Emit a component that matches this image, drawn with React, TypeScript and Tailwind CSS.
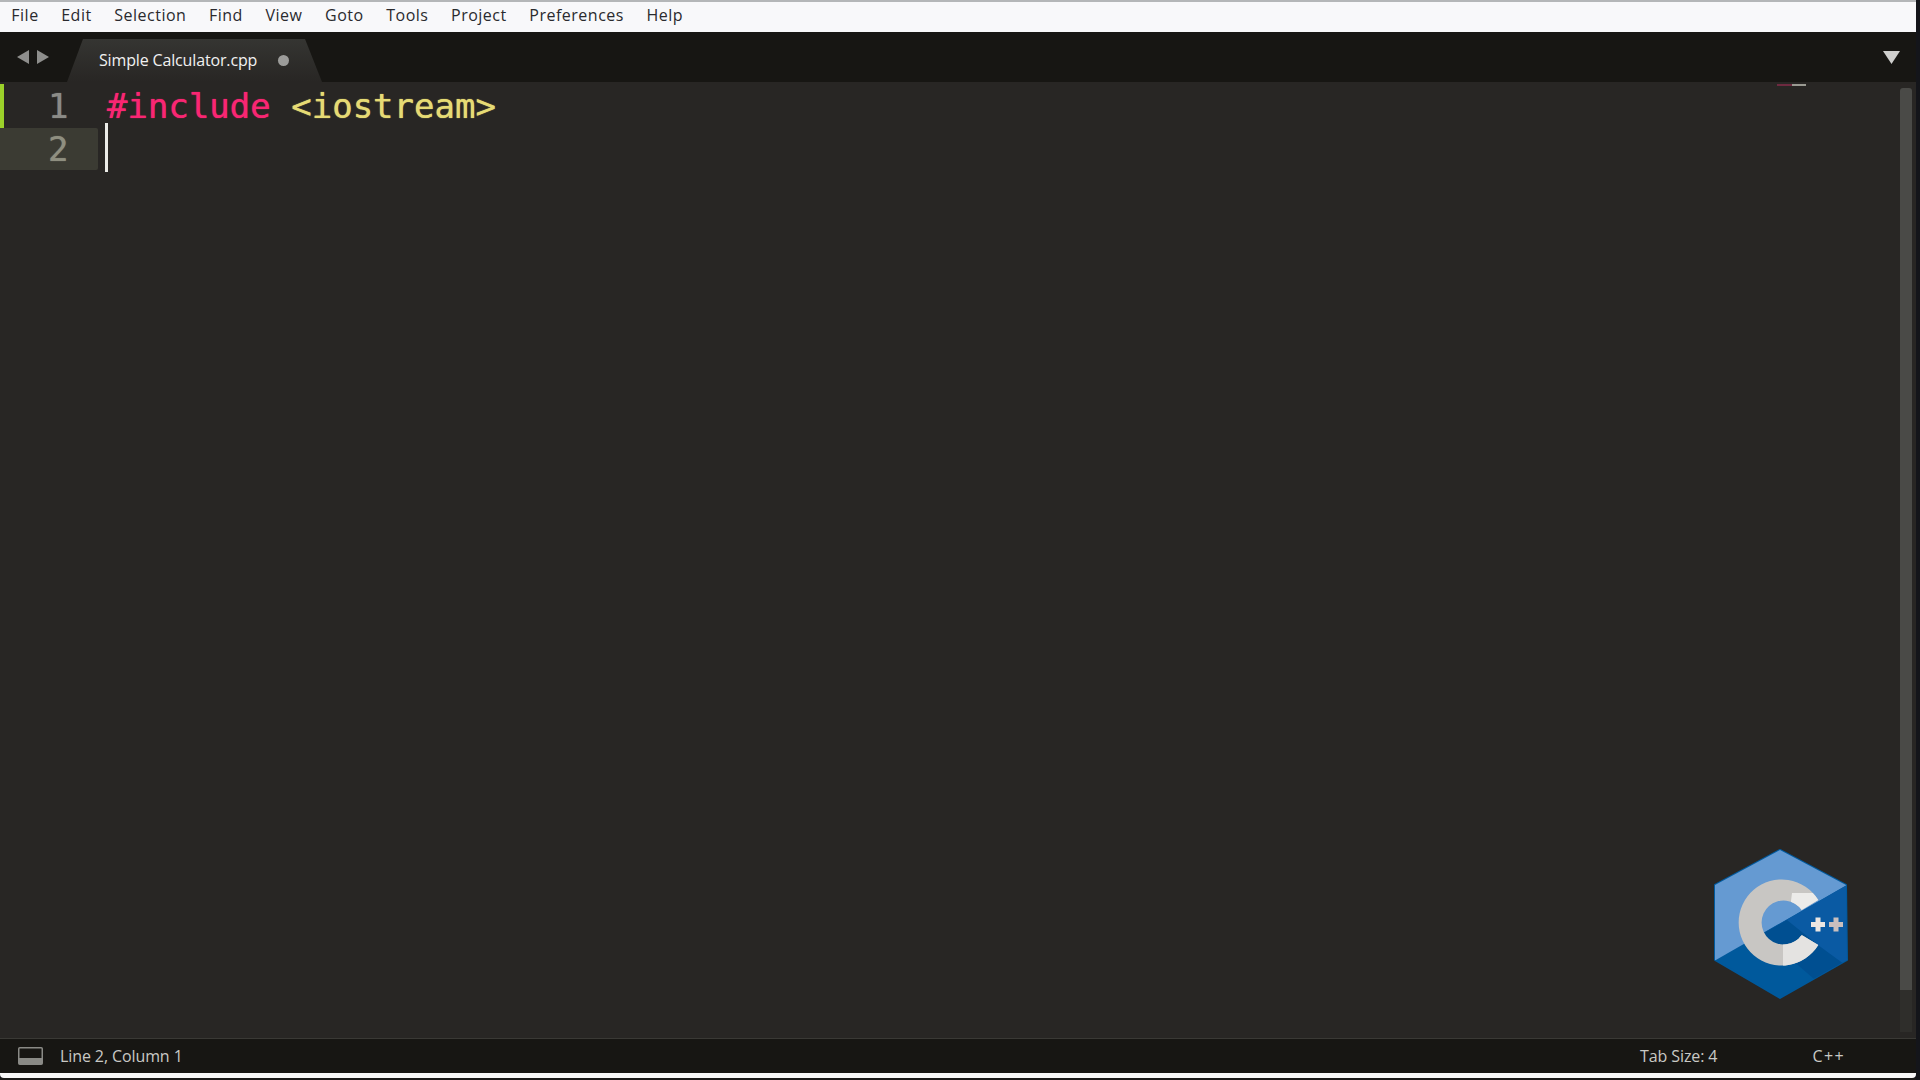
import React from 'react';

const menus = ['File', 'Edit', 'Selection', 'Find', 'View', 'Goto', 'Tools', 'Project', 'Preferences', 'Help'];

const CPath = 'M104.3 51 A43 43 0 1 0 104.3 96 L87.7 86 A22 22 0 1 1 87.7 61 Z';

const CppLogo = () => (
  <svg width="134" height="150" viewBox="0 0 134 150">
    <defs>
      <clipPath id="cShape">
        <path d={CPath} />
      </clipPath>
      <clipPath id="hexShape">
        <path d="M66 1 L132 36 L133 111 L66 149 L1 111 L1 36 Z" />
      </clipPath>
    </defs>
    <path d="M66 1 L132 36 L133 111 L66 149 L1 111 L1 36 Z" fill="#00599c" stroke="#00599c" strokeWidth="2" strokeLinejoin="round" />
    <g clipPath="url(#hexShape)">
      <path d="M133 36 L0 112 L0 0 L133 0 Z" fill="#659ad2" />
      <path d="M48 85 L133 36 L134 111 L110 130 Z" fill="#0a5aa3" />
      <path d="M48 85 L73 71 L104 96 L134 118 L100 130 Z" fill="#004f91" />
    </g>
    <path d={CPath} fill="#c8c6c3" />
    <g clipPath="url(#cShape)">
      <path d="M78 44 L110 44 L110 52 L82 66 L76 60 Z" fill="#ecebe9" />
      <path d="M69 90 L110 82 L110 125 L69 125 Z" fill="#e4e3e1" />
    </g>
    <path d="M101.5 68.5 h5 v4.5 h4.5 v5 h-4.5 v4.5 h-5 v-4.5 h-4.5 v-5 h4.5 Z" fill="#ebe6e2" />
    <path d="M119.5 68.5 h5 v4.5 h4.5 v5 h-4.5 v4.5 h-5 v-4.5 h-4.5 v-5 h4.5 Z" fill="#c9bfbe" />
  </svg>
);

const App: React.FC = () => {
  return (
    <div className="relative flex h-screen w-full flex-col overflow-hidden bg-[#14151a] pr-[4px] font-['Open_Sans','Noto_Sans',sans-serif]">
      {/* menu bar */}
      <div className="flex h-[32px] shrink-0 items-center border-t-2 border-[#b4b6b8] bg-[#f8f8fa] pb-[4px] text-[16px] tracking-[0.5px] text-[#2a2a2e]">
        {menus.map(m => (
          <span key={m} className="px-[11.3px]">{m}</span>
        ))}
      </div>

      {/* tab strip */}
      <div className="flex h-[50px] shrink-0 items-end bg-[#171613]">
        <div className="flex h-full w-[67px] items-center gap-[8px] pl-[17px]">
          <svg width="12" height="14" viewBox="0 0 12 14"><path d="M12 0 V14 L0 7 Z" fill="#8e8e8c" /></svg>
          <svg width="12" height="14" viewBox="0 0 12 14"><path d="M0 0 V14 L12 7 Z" fill="#8e8e8c" /></svg>
        </div>
        <div className="flex h-[43px] w-[255px] items-center bg-gradient-to-b from-[#353532] to-[#282624] pb-[1px] pl-[32px] [clip-path:polygon(16px_0,238px_0,255px_100%,0_100%)]">
          <span className="text-[16px] tracking-[-0.15px] text-[#f1f1f1]">Simple Calculator.cpp</span>
          <span className="ml-[21px] h-[11px] w-[11px] rounded-full bg-[#9c9c9a]"></span>
        </div>
        <div className="flex-1"></div>
        <div className="flex h-full items-center pr-[16px]">
          <svg width="17" height="13" viewBox="0 0 17 13"><path d="M0 0 H17 L8.5 13 Z" fill="#cfcfcd" /></svg>
        </div>
      </div>

      {/* editor */}
      <div className="relative flex-1 bg-[#282624] pt-[3px] font-['DejaVu_Sans_Mono',monospace] text-[34px] leading-[43px] [text-shadow:0_0_1px_currentColor]">
        <div className="flex h-[43px]">
          <div className="-mt-[1px] flex h-[44px] w-[98px] border-l-[4px] border-[#9bd12a] pl-[44px] pt-[1px] text-[#8b8b87]">1</div>
          <div className="pl-[9px] whitespace-pre">
            <span className="text-[#f92672]">#include</span>
            <span className="text-[#e6db74]"> &lt;iostream&gt;</span>
          </div>
        </div>
        <div className="flex h-[42px]">
          <div className="w-[98px] rounded-r-[2px] bg-[#3b3b33] pl-[48px] text-[#8f8f80]">2</div>
        </div>
        {/* caret */}
        <div className="absolute left-[105px] top-[41px] h-[49px] w-[3px] bg-[#ecece8]"></div>
        {/* minimap hint */}
        <div className="absolute left-[1777px] top-[2px] flex h-[2px] w-[29px]">
          <div className="w-[15px] bg-[#6e2a40]"></div>
          <div className="w-[14px] bg-[#9a9a92]"></div>
        </div>
        {/* scrollbar */}
        <div className="absolute right-[4px] top-[6px] h-[902px] w-[12px] rounded-t-[3px] bg-[#4a4a47]"></div>
        <div className="absolute right-[4px] top-[908px] h-[42px] w-[12px] bg-[#2f2e2b]"></div>
        {/* logo */}
        <div className="absolute left-[1714px] top-[767px]">
          <CppLogo />
        </div>
      </div>

      {/* status bar */}
      <div className="flex h-[35px] shrink-0 items-center border-t border-[#3a3935] bg-[#171613] pr-[71px] text-[16px] tracking-[-0.1px] text-[#c9c9c5]">
        <svg className="ml-[18px]" width="25" height="18" viewBox="0 0 25 18">
          <rect x="0.75" y="0.75" width="23.5" height="16.5" rx="1" fill="none" stroke="#8a8a86" strokeWidth="1.5" />
          <rect x="1" y="11" width="23" height="6" fill="#8a8a86" />
        </svg>
        <span className="ml-[17px]">Line 2, Column 1</span>
        <span className="ml-auto">Tab Size: 4</span>
        <span className="ml-[95px] tracking-[1.4px]">C++</span>
      </div>

      {/* window frame at the bottom */}
      <div className="h-[5px] shrink-0 rounded-b-[4px] bg-[#f8f8f8]"></div>
      <div className="h-[2px] shrink-0 bg-[#1a1917]"></div>
    </div>
  );
};

export default App;
